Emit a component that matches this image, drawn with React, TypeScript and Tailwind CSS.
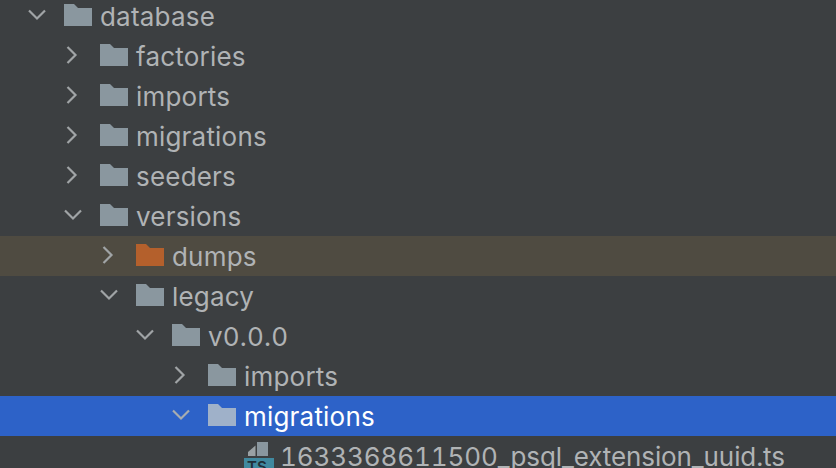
import * as React from "react";

type Row = {
  name: string;
  pad: string;
  open?: boolean;
  kind?: "dumps" | "selected" | "file";
};

const rows: Row[] = [
  { name: "database", pad: "pl-[28px]", open: true },
  { name: "factories", pad: "pl-[64px]" },
  { name: "imports", pad: "pl-[64px]" },
  { name: "migrations", pad: "pl-[64px]" },
  { name: "seeders", pad: "pl-[64px]" },
  { name: "versions", pad: "pl-[64px]", open: true },
  { name: "dumps", pad: "pl-[100px]", kind: "dumps" },
  { name: "legacy", pad: "pl-[100px]", open: true },
  { name: "v0.0.0", pad: "pl-[136px]", open: true },
  { name: "imports", pad: "pl-[172px]" },
  { name: "migrations", pad: "pl-[172px]", open: true, kind: "selected" },
  { name: "1633368611500_psql_extension_uuid.ts", pad: "pl-[244px]", kind: "file" },
];

const Chevron = ({ open, color }: { open?: boolean; color: string }) => (
  <svg width="18" height="18" viewBox="0 0 18 18" fill="none" className="shrink-0 mb-[2px]">
    <path
      d={open ? "M1 4.5 L9 12.5 L17 4.5" : "M3.5 1 L11.5 9 L3.5 17"}
      stroke={color}
      strokeWidth="2.2"
    />
  </svg>
);

const Folder = ({ color }: { color: string }) => (
  <svg width="28" height="22" viewBox="0 0 28 22" className="shrink-0 mb-[2px]">
    <path d="M0 0 H10 L14 4 H28 V22 H0 Z" fill={color} />
  </svg>
);

const FileIcon = () => (
  <div className="relative w-[36px] h-[32px] shrink-0">
    <svg width="20" height="14" viewBox="0 0 20 14" className="absolute left-[4px] top-[2px]">
      <path d="M9 0 H20 V14 H9 Z" fill="#8a979f" />
      <path d="M0 14 V10 L7.5 3.5 V14 Z" fill="#9aa1a4" />
    </svg>
    <div className="absolute left-0 top-[18px] w-[30px] h-[18px] bg-[#40899f] text-[#1f2f38] text-[15px] font-semibold leading-[18px] pl-[3px]">
      TS
    </div>
  </div>
);

export default function App() {
  return (
    <div
      className="w-[836px] h-[468px] overflow-hidden bg-[#3c3f41] text-[#b0b3b5]"
      style={{ fontFamily: "Inter, 'Noto Sans', sans-serif" }}
    >
      <div className="-mt-1">
        {rows.map((row, i) => {
          const selected = row.kind === "selected";
          const bg = selected ? "bg-[#2d62c8]" : row.kind === "dumps" ? "bg-[#4f4b41]" : "";
          const folder = selected ? "#9fb1c9" : row.kind === "dumps" ? "#b4602c" : "#8a979f";
          return (
            <div key={i} className={`flex items-center h-10 ${row.pad} ${bg}`}>
              {row.kind === "file" ? (
                <FileIcon />
              ) : (
                <>
                  <Chevron open={row.open} color={selected ? "#a7adb0" : "#a0a4a6"} />
                  <div className="w-[18px] shrink-0" />
                  <Folder color={folder} />
                </>
              )}
              <span
                className={`text-[26px] leading-none whitespace-nowrap tabular-nums pt-[2px] ${
                  row.kind === "file" ? "tracking-[-0.1px]" : "ml-2 tracking-[0.2px]"
                } ${selected ? "text-white" : ""}`}
              >
                {row.name}
              </span>
            </div>
          );
        })}
      </div>
    </div>
  );
}
